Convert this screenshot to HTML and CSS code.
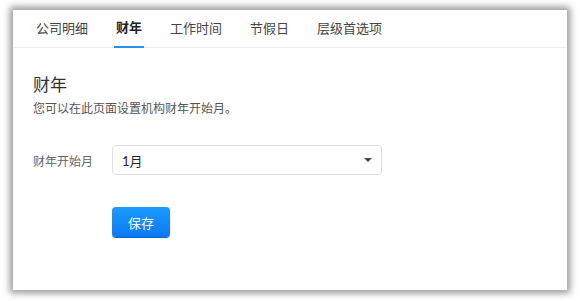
FILE: index.html
```html
<!DOCTYPE html>
<html lang="zh-CN">
<head>
  <meta charset="UTF-8">
  <title>财年</title>
  <link rel="stylesheet" href="styles.css">
</head>
<body>
  <div class="settings-card">
    <ul class="tabs">
      <li class="tab">公司明细</li>
      <li class="tab active">财年</li>
      <li class="tab">工作时间</li>
      <li class="tab">节假日</li>
      <li class="tab">层级首选项</li>
    </ul>

    <div class="panel">
      <h2>财年</h2>
      <p class="desc">您可以在此页面设置机构财年开始月。</p>

      <div class="form-row">
        <label class="form-label">财年开始月</label>
        <div class="select">
          <span>1月</span>
          <span class="caret"></span>
        </div>
      </div>

      <div class="form-actions">
        <button type="button" class="save-button">保存</button>
      </div>
    </div>
  </div>
</body>
</html>
```

FILE: styles.css
```css
* {
  margin: 0;
  padding: 0;
  box-sizing: border-box;
  font-family: Lato, "Noto Sans CJK SC", sans-serif;
}
body {
  background: #fff;
  padding: 10px 13px;
}
.settings-card {
  width: 554px;
  height: 280px;
  background: #fff;
  box-shadow: 0 0 7px 3px rgba(0, 0, 0, 0.42);
}
.tabs {
  list-style: none;
  display: flex;
  gap: 24px;
  height: 38px;
  padding-left: 21px;
  border-bottom: 1px solid #eceef0;
}
.tab {
  padding: 0 2px;
  font-size: 13px;
  line-height: 37px;
  color: #444;
}
.tab.active {
  color: #222;
  font-weight: 600;
  border-bottom: 2px solid #2a8ff0;
  line-height: 35px;
  margin-bottom: -1px;
}
.panel {
  padding: 27px 20px 0;
}
h2 {
  font-size: 17px;
  font-weight: 400;
  line-height: 20px;
  color: #333;
}
.desc {
  margin-top: 5px;
  font-size: 12px;
  line-height: 18px;
  color: #555;
}
.form-row {
  display: flex;
  align-items: center;
  margin-top: 27px;
}
.form-label {
  width: 79px;
  font-size: 12px;
  color: #666;
}
.select {
  width: 270px;
  height: 30px;
  border: 1px solid #dcdfe3;
  border-radius: 4px;
  display: flex;
  align-items: center;
  justify-content: space-between;
  padding: 0 9px 0 9px;
  font-size: 13px;
  color: #222;
}
.caret {
  width: 0;
  height: 0;
  border-left: 4px solid transparent;
  border-right: 4px solid transparent;
  border-top: 4px solid #34495e;
}
.form-actions {
  margin-top: 32px;
  padding-left: 79px;
}
.save-button {
  width: 58px;
  height: 30px;
  border: none;
  border-radius: 4px;
  background: linear-gradient(to bottom, #1a9bff, #0a78f5);
  box-shadow: 0 1px 0 #0762c9;
  color: #fff;
  font-size: 13px;
}
```
